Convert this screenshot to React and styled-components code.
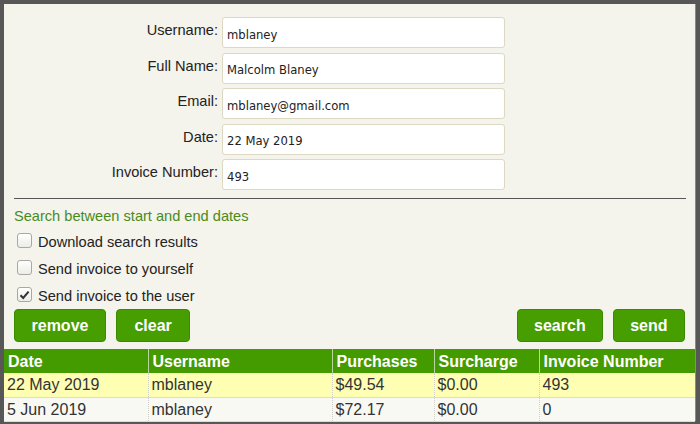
import React from "react";
import styled, { createGlobalStyle } from "styled-components";

const Global = createGlobalStyle`
  html, body { margin: 0; padding: 0; background: #575757; }
  body { font-family: "Liberation Sans", Arial, sans-serif; }
  * { box-sizing: border-box; }
`;

const Frame = styled.div`
  width: 700px;
  height: 424px;
  padding: 4px 4px 3px 4px;
  background: #575757;
`;

const Panel = styled.div`
  height: 100%;
  background: #f4f3ec;
  display: flex;
  flex-direction: column;
  border-right: 1px solid #8a8a86;
`;

const Top = styled.div`
  padding: 13px 9px 0 10px;
  display: flex;
  flex-direction: column;
`;

const Form = styled.div`
  display: grid;
  grid-template-columns: 204px 283px;
  column-gap: 4px;
  row-gap: 4.5px;
`;

const Label = styled.label`
  text-align: right;
  font-size: 14.6px;
  line-height: 17px;
  color: #222;
  padding-top: 5px;
`;

const Input = styled.input`
  height: 31px;
  width: 283px;
  border: 1px solid #ddd8c2;
  border-radius: 3px;
  background: #fff;
  padding: 3px 4px 0 4px;
  font-family: "DejaVu Sans", sans-serif;
  font-stretch: condensed;
  font-size: 12.9px;
  color: #222;
  outline: none;
`;

const Rule = styled.hr`
  margin: 8px 0 0 0;
  border: none;
  border-top: 1px solid #555;
  height: 0;
`;

const Hint = styled.div`
  margin-top: 9px;
  color: #4a8b1c;
  font-size: 14.6px;
  line-height: 17px;
`;

const Options = styled.div`
  display: flex;
  flex-direction: column;
  margin-top: 9px;
  gap: 10px;
`;

const Option = styled.label`
  display: flex;
  align-items: center;
  gap: 6px;
  font-size: 14.6px;
  line-height: 17px;
  color: #222;
  padding-left: 3px;
`;

const Box = styled.span`
  width: 15px;
  height: 15px;
  border: 1px solid #a8a8a4;
  border-radius: 3px;
  background: linear-gradient(#ffffff, #ecece8);
  display: flex;
  align-items: center;
  justify-content: center;
  margin-top: -4px;
`;

const Buttons = styled.div`
  display: flex;
  gap: 10px;
  margin: 4px 1px 0 0;
`;

const Spacer = styled.div`
  flex: 1;
`;

const Button = styled.button`
  height: 33px;
  padding: 0 ${(p) => p.$pad}px;
  background: #469e00;
  border: 1px solid #3b8a00;
  border-radius: 4px;
  color: #fff;
  font-family: "Liberation Sans", Arial, sans-serif;
  font-weight: bold;
  font-size: 16px;
  cursor: pointer;
`;

const Table = styled.table`
  margin-top: 7px;
  width: 100%;
  border-collapse: collapse;
  font-size: 16px;
  color: #333;
  table-layout: fixed;
`;

const Th = styled.th`
  background: #449b00;
  color: #fff;
  text-align: left;
  font-weight: bold;
  height: 24px;
  padding: 1px 4px 0 4px;
  border-left: 1px solid #b8d6a0;
  &:first-child { border-left: none; }
`;

const Tr = styled.tr`
  background: ${(p) => (p.$hl ? "#ffffb4" : "#f9f9f4")};
  border-bottom: 1px solid #dcdcd4;
`;

const Td = styled.td`
  height: 24px;
  padding: 1px 3px 0 3px;
  border-left: 1px dotted #cfcfc8;
  white-space: nowrap;
  &:first-child { border-left: none; }
`;

const Check = () => (
  <svg width="11" height="10" viewBox="0 0 11 10">
    <path d="M1.5 5.2 L4.2 8 L9.6 1.6" fill="none" stroke="#333" strokeWidth="2" />
  </svg>
);

const fields = [
  ["Username:", "mblaney"],
  ["Full Name:", "Malcolm Blaney"],
  ["Email:", "mblaney@gmail.com"],
  ["Date:", "22 May 2019"],
  ["Invoice Number:", "493"],
];

const rows = [
  ["22 May 2019", "mblaney", "$49.54", "$0.00", "493"],
  ["5 Jun 2019", "mblaney", "$72.17", "$0.00", "0"],
];

export default function App() {
  return (
    <>
      <Global />
      <Frame>
        <Panel>
          <Top>
            <Form>
              {fields.map(([l, v]) => (
                <React.Fragment key={l}>
                  <Label>{l}</Label>
                  <Input defaultValue={v} />
                </React.Fragment>
              ))}
            </Form>
            <Rule />
            <Hint>Search between start and end dates</Hint>
            <Options>
              <Option><Box /> Download search results</Option>
              <Option><Box /> Send invoice to yourself</Option>
              <Option><Box><Check /></Box> Send invoice to the user</Option>
            </Options>
            <Buttons>
              <Button $pad={16.5}>remove</Button>
              <Button $pad={17.5}>clear</Button>
              <Spacer />
              <Button $pad={16}>search</Button>
              <Button $pad={16.5}>send</Button>
            </Buttons>
          </Top>
          <Table>
            <colgroup>
              <col style={{ width: 144 }} />
              <col style={{ width: 184 }} />
              <col style={{ width: 102 }} />
              <col style={{ width: 105 }} />
              <col />
            </colgroup>
            <thead>
              <tr>
                <Th>Date</Th>
                <Th>Username</Th>
                <Th>Purchases</Th>
                <Th>Surcharge</Th>
                <Th>Invoice Number</Th>
              </tr>
            </thead>
            <tbody>
              {rows.map((r, i) => (
                <Tr key={i} $hl={i === 0}>
                  {r.map((c, j) => (
                    <Td key={j}>{c}</Td>
                  ))}
                </Tr>
              ))}
            </tbody>
          </Table>
        </Panel>
      </Frame>
    </>
  );
}
